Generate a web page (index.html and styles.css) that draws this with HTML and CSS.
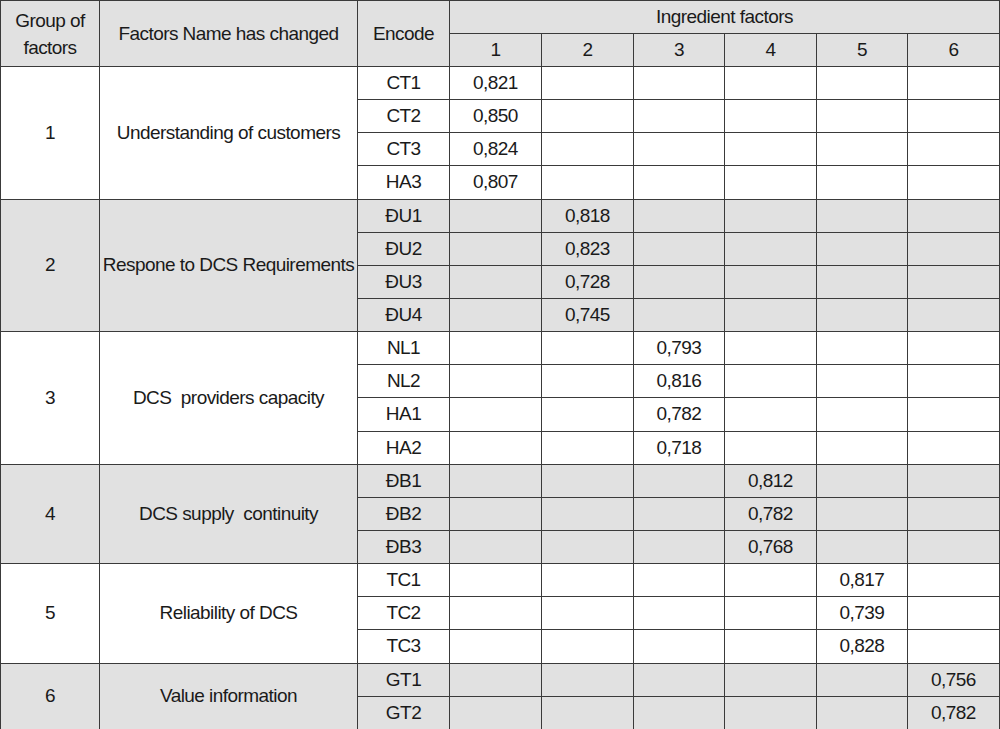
FILE: index.html
```html
<!DOCTYPE html>
<html>
<head>
<meta charset="utf-8">
<link rel="stylesheet" href="styles.css">
</head>
<body>
<table class="factors">
  <colgroup>
    <col class="c-group"><col class="c-name"><col class="c-code">
    <col class="c-val"><col class="c-val"><col class="c-val5"><col class="c-val"><col class="c-val5"><col class="c-val">
  </colgroup>
  <thead>
    <tr class="hrow">
      <th rowspan="2" class="two-line">Group of<br>factors</th>
      <th rowspan="2">Factors Name has changed</th>
      <th rowspan="2">Encode</th>
      <th colspan="6">Ingredient factors</th>
    </tr>
    <tr class="hrow">
      <th>1</th><th>2</th><th>3</th><th>4</th><th>5</th><th>6</th>
    </tr>
  </thead>
  <tbody class="g-white">
    <tr><td rowspan="4">1</td><td rowspan="4">Understanding of customers</td><td>CT1</td><td>0,821</td><td></td><td></td><td></td><td></td><td></td></tr>
    <tr><td>CT2</td><td>0,850</td><td></td><td></td><td></td><td></td><td></td></tr>
    <tr><td>CT3</td><td>0,824</td><td></td><td></td><td></td><td></td><td></td></tr>
    <tr><td>HA3</td><td>0,807</td><td></td><td></td><td></td><td></td><td></td></tr>
  </tbody>
  <tbody class="g-grey">
    <tr><td rowspan="4">2</td><td rowspan="4">Respone to DCS Requirements</td><td>ĐU1</td><td></td><td>0,818</td><td></td><td></td><td></td><td></td></tr>
    <tr><td>ĐU2</td><td></td><td>0,823</td><td></td><td></td><td></td><td></td></tr>
    <tr><td>ĐU3</td><td></td><td>0,728</td><td></td><td></td><td></td><td></td></tr>
    <tr><td>ĐU4</td><td></td><td>0,745</td><td></td><td></td><td></td><td></td></tr>
  </tbody>
  <tbody class="g-white">
    <tr><td rowspan="4">3</td><td rowspan="4">DCS&nbsp; providers capacity</td><td>NL1</td><td></td><td></td><td>0,793</td><td></td><td></td><td></td></tr>
    <tr><td>NL2</td><td></td><td></td><td>0,816</td><td></td><td></td><td></td></tr>
    <tr><td>HA1</td><td></td><td></td><td>0,782</td><td></td><td></td><td></td></tr>
    <tr><td>HA2</td><td></td><td></td><td>0,718</td><td></td><td></td><td></td></tr>
  </tbody>
  <tbody class="g-grey">
    <tr><td rowspan="3">4</td><td rowspan="3">DCS supply&nbsp; continuity</td><td>ĐB1</td><td></td><td></td><td></td><td>0,812</td><td></td><td></td></tr>
    <tr><td>ĐB2</td><td></td><td></td><td></td><td>0,782</td><td></td><td></td></tr>
    <tr><td>ĐB3</td><td></td><td></td><td></td><td>0,768</td><td></td><td></td></tr>
  </tbody>
  <tbody class="g-white">
    <tr><td rowspan="3">5</td><td rowspan="3">Reliability of DCS</td><td>TC1</td><td></td><td></td><td></td><td></td><td>0,817</td><td></td></tr>
    <tr><td>TC2</td><td></td><td></td><td></td><td></td><td>0,739</td><td></td></tr>
    <tr><td>TC3</td><td></td><td></td><td></td><td></td><td>0,828</td><td></td></tr>
  </tbody>
  <tbody class="g-grey">
    <tr><td rowspan="2">6</td><td rowspan="2">Value information</td><td>GT1</td><td></td><td></td><td></td><td></td><td></td><td>0,756</td></tr>
    <tr><td>GT2</td><td></td><td></td><td></td><td></td><td></td><td>0,782</td></tr>
  </tbody>
</table>
</body>
</html>
```

FILE: styles.css
```css
html, body {
  margin: 0;
  padding: 0;
  overflow: hidden;
  background: #ffffff;
}

.factors {
  border-collapse: collapse;
  table-layout: fixed;
  width: 1000px;
  font-family: "Liberation Sans", Arial, sans-serif;
  font-size: 19px;
  color: #1a1a1a;
  letter-spacing: -0.55px;
}

.c-group { width: 99px; }
.c-name { width: 258px; }
.c-code { width: 92px; }
.c-val { width: 92px; }
.c-val5 { width: 91px; }

.factors th,
.factors td {
  border: 1px solid #3a3a3a;
  padding: 0;
  text-align: center;
  vertical-align: middle;
  white-space: nowrap;
  font-weight: normal;
  line-height: 20px;
}

.factors thead th {
  background: #e1e1e1;
}

.factors .hrow {
  height: 33px;
}

.factors .two-line {
  line-height: 27px;
}

.factors tbody tr {
  height: 33.15px;
}

.g-grey td {
  background: #e1e1e1;
}

.g-white td {
  background: #ffffff;
}
```
